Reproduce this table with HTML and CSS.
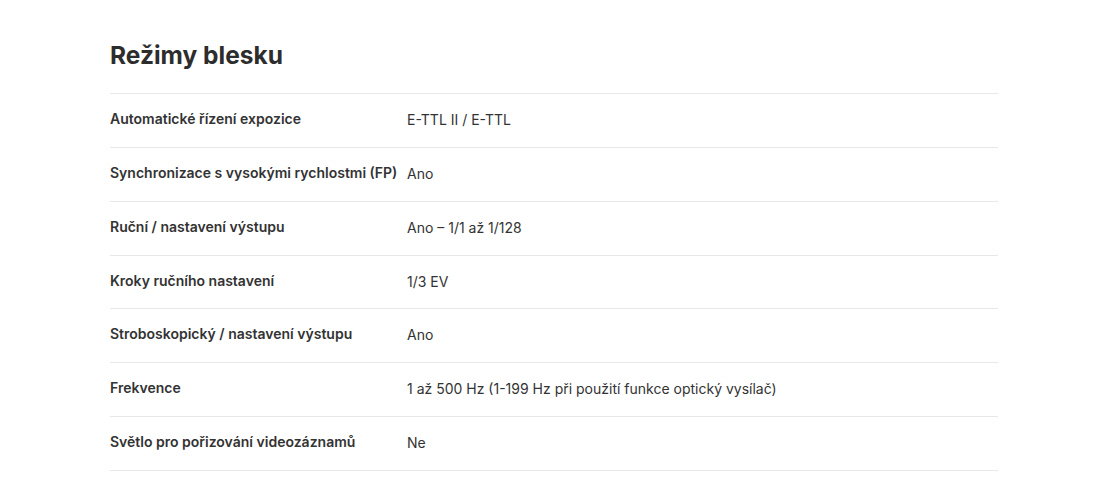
FILE: index.html
```html
<!DOCTYPE html>
<html lang="cs">
<head>
<meta charset="utf-8">
<link rel="stylesheet" href="styles.css">
</head>
<body>
<section class="specs">
  <h2 class="specs-title">Režimy blesku</h2>
  <div class="spec-table">
    <div class="spec-row"><div class="spec-label">Automatické řízení expozice</div><div class="spec-value">E-TTL II / E-TTL</div></div>
    <div class="spec-row"><div class="spec-label">Synchronizace s vysokými rychlostmi (FP)</div><div class="spec-value">Ano</div></div>
    <div class="spec-row"><div class="spec-label">Ruční / nastavení výstupu</div><div class="spec-value">Ano – 1/1 až 1/128</div></div>
    <div class="spec-row"><div class="spec-label">Kroky ručního nastavení</div><div class="spec-value">1/3 EV</div></div>
    <div class="spec-row"><div class="spec-label">Stroboskopický / nastavení výstupu</div><div class="spec-value">Ano</div></div>
    <div class="spec-row"><div class="spec-label">Frekvence</div><div class="spec-value">1 až 500 Hz (1-199 Hz při použití funkce optický vysílač)</div></div>
    <div class="spec-row"><div class="spec-label">Světlo pro pořizování videozáznamů</div><div class="spec-value">Ne</div></div>
  </div>
</section>
</body>
</html>
```
FILE: styles.css
```css
html, body {
  margin: 0;
  padding: 0;
  background: #ffffff;
}
body {
  font-family: "Inter", "Open Sans", sans-serif;
  color: #333333;
}
.specs {
  width: 888px;
  margin: 0 0 0 110px;
  padding-top: 39px;
}
.specs-title {
  margin: 0;
  font-size: 24.5px;
  font-weight: 700;
  line-height: 32px;
  color: #2d2d2d;
  padding-bottom: 22px;
}
.spec-table {
  border-top: 1px solid #e8e8e8;
}
.spec-row {
  display: flex;
  align-items: center;
  height: 52.86px;
  border-bottom: 1px solid #e8e8e8;
}
.spec-label {
  width: 297px;
  font-size: 14px;
  font-weight: 600;
  margin-top: -4px;
}
.spec-value {
  font-size: 14px;
  font-weight: 400;
  margin-top: -2px;
}
```
